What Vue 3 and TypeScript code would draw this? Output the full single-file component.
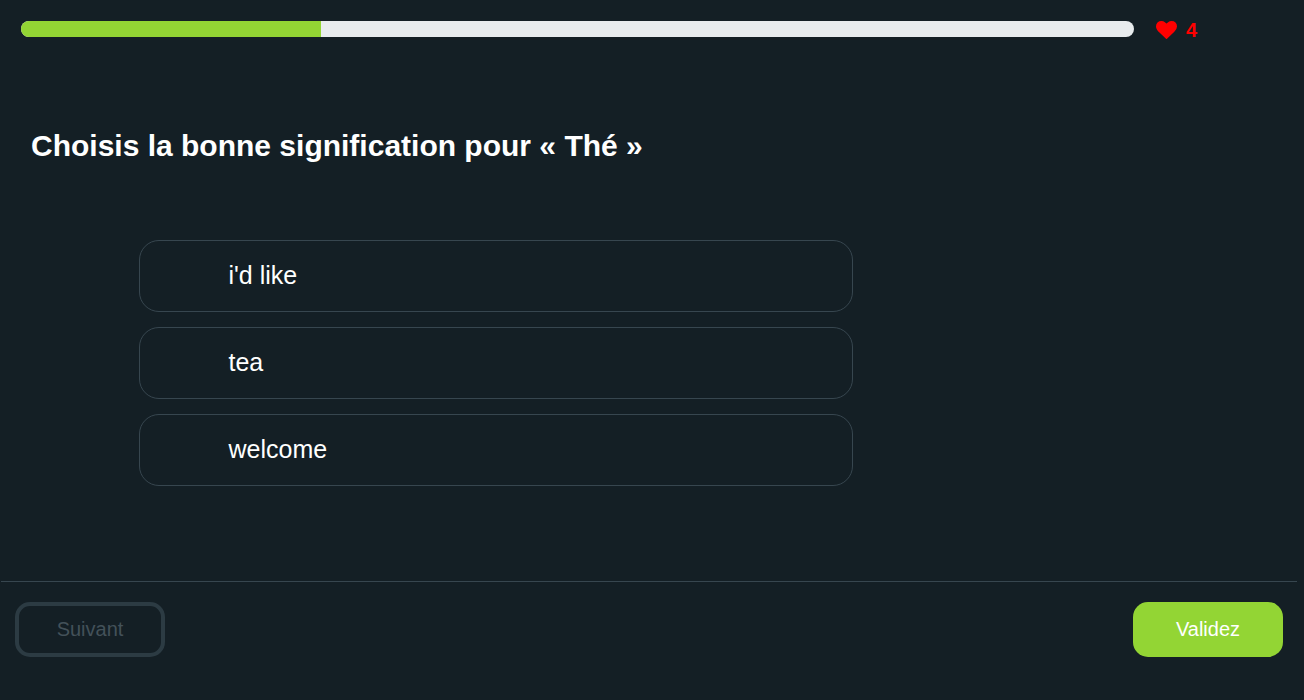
<script setup lang="ts">
import { ref } from 'vue'

const progress = ref<number>(300 / 1113)
const hearts = ref<number>(4)
const word = 'Thé'
const choices: string[] = ["i'd like", 'tea', 'welcome']
const selected = ref<string | null>(null)
</script>

<template>
  <main class="quiz">
    <header class="top">
      <div class="track">
        <div class="fill" :style="{ width: progress * 100 + '%' }"></div>
      </div>
      <svg class="heart" viewBox="0 128 1792 1536" aria-hidden="true">
        <path
          d="M896 1664q-26 0-44-18l-624-602q-10-8-27.500-26t-55.500-65.500-68-97.500-53.500-121-23.500-138q0-220 127-344t351-124q62 0 126.500 21.500t120 58 95.500 68.500 76 68q36-36 76-68t95.500-68.500 120-58 126.500-21.500q224 0 351 124t127 344q0 221-229 450l-623 600q-18 18-44 18z"
          fill="#ff0000"
        />
      </svg>
      <span class="count">{{ hearts }}</span>
    </header>
    <h1 class="question">Choisis la bonne signification pour « {{ word }} »</h1>
    <ul class="choices">
      <li v-for="choice in choices" :key="choice" class="choice" @click="selected = choice">
        {{ choice }}
      </li>
    </ul>
    <footer class="actions">
      <button class="btn next" type="button">Suivant</button>
      <button class="btn validate" type="button">Validez</button>
    </footer>
  </main>
</template>

<style>
html,
body {
  background: #141f25;
}
</style>

<style scoped>
.quiz {
  box-sizing: border-box;
  width: 1304px;
  height: 700px;
  overflow: hidden;
  display: flex;
  flex-direction: column;
  background: #141f25;
  color: #fff;
  font-family: 'Liberation Sans', Arial, sans-serif;
}
.top {
  display: flex;
  align-items: flex-start;
  height: 18px;
  margin-top: 21px;
  padding-left: 21px;
}
.track {
  width: 1113px;
  height: 16px;
  border-radius: 8px;
  overflow: hidden;
  background: #e8ecee;
}
.fill {
  height: 100%;
  background: #93d534;
}
.heart {
  width: 21px;
  height: 18px;
  margin-left: 22px;
}
.count {
  margin-left: 9px;
  font-size: 20px;
  font-weight: bold;
  line-height: 18px;
  color: #ff0000;
}
.question {
  margin: 90px 0 0 31px;
  font-size: 30px;
  line-height: 34px;
  font-weight: bold;
}
.choices {
  display: flex;
  flex-direction: column;
  gap: 15px;
  width: 714px;
  margin: 77px 0 0 139px;
  padding: 0;
  list-style: none;
}
.choice {
  box-sizing: border-box;
  height: 72px;
  padding-left: 88.5px;
  border: 1px solid #37464f;
  border-radius: 20px;
  font-size: 25px;
  line-height: 68px;
  cursor: pointer;
}
.actions {
  display: flex;
  justify-content: space-between;
  margin: 95px 7px 0 1px;
  padding: 20px 14px 0;
  border-top: 1px solid #37464f;
}
.btn {
  box-sizing: border-box;
  width: 150px;
  height: 55px;
  padding: 0;
  border-radius: 15px;
  font-family: inherit;
  font-size: 20px;
}
.next {
  border: 4px solid #2c3b43;
  background: transparent;
  color: #435159;
}
.validate {
  border: 0;
  background: #93d534;
  color: #fff;
}
</style>
